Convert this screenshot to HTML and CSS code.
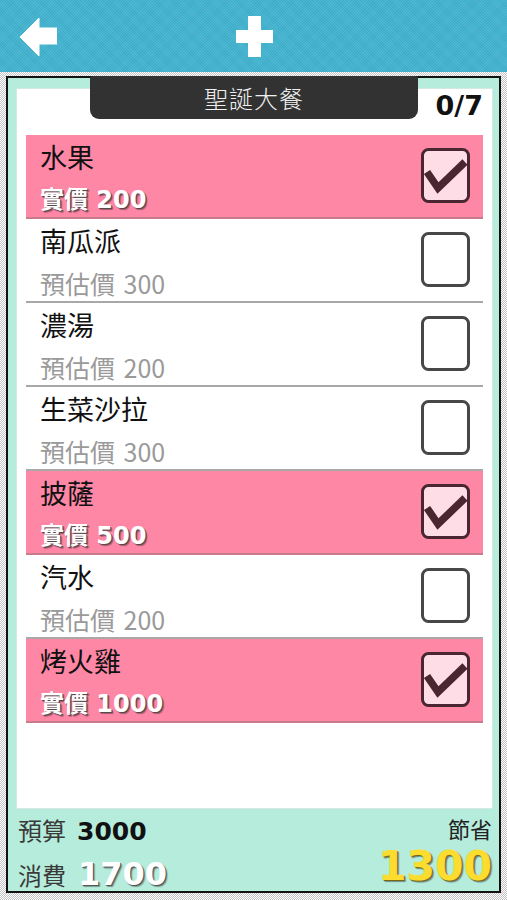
FILE: index.html
```html
<!DOCTYPE html>
<html lang="zh-Hant">
<head>
    <meta charset="UTF-8">
    <meta name="viewport" content="width=device-width, initial-scale=1.0">
    <title>聖誕大餐</title>
    <link rel="stylesheet" href="styles.css">
</head>
<body>
    <header class="topbar">
        <button class="icon-btn back">
            <svg width="37" height="40" viewBox="0 0 37 40"><path d="M0 20 L19 1 L19 11 L37 11 L37 27 L19 27 L19 39 Z" fill="#fff" stroke="#fff" stroke-width="1" stroke-linejoin="round"/></svg>
        </button>
        <button class="icon-btn add">
            <svg width="37" height="41" viewBox="0 0 37 41"><path d="M12 0 H25 V14 H37 V27 H25 V41 H12 V27 H0 V14 H12 Z" fill="#fff"/></svg>
        </button>
    </header>

    <main class="stage">
        <section class="panel">
            <div class="tab">聖誕大餐</div>
            <div class="sheet">
                <div class="sheet-head"><span class="count">0/7</span></div>
                <ul class="items">
                    <li class="item done">
                        <div class="info"><div class="name">水果</div><div class="price">實價 200</div></div>
                        <svg class="box" width="49" height="55" viewBox="0 0 49 55"><rect x="1.5" y="1.5" width="46" height="52" rx="6" fill="#ffdde6" stroke="#4a2631" stroke-width="3"/><path d="M6 24 L17 40 L44 14" fill="none" stroke="#4a2631" stroke-width="7.5"/></svg>
                    </li>
                    <li class="item">
                        <div class="info"><div class="name">南瓜派</div><div class="est">預估價 300</div></div>
                        <svg class="box" width="49" height="55" viewBox="0 0 49 55"><rect x="1.5" y="1.5" width="46" height="52" rx="6" fill="#fff" stroke="#474747" stroke-width="3"/></svg>
                    </li>
                    <li class="item">
                        <div class="info"><div class="name">濃湯</div><div class="est">預估價 200</div></div>
                        <svg class="box" width="49" height="55" viewBox="0 0 49 55"><rect x="1.5" y="1.5" width="46" height="52" rx="6" fill="#fff" stroke="#474747" stroke-width="3"/></svg>
                    </li>
                    <li class="item">
                        <div class="info"><div class="name">生菜沙拉</div><div class="est">預估價 300</div></div>
                        <svg class="box" width="49" height="55" viewBox="0 0 49 55"><rect x="1.5" y="1.5" width="46" height="52" rx="6" fill="#fff" stroke="#474747" stroke-width="3"/></svg>
                    </li>
                    <li class="item done">
                        <div class="info"><div class="name">披薩</div><div class="price">實價 500</div></div>
                        <svg class="box" width="49" height="55" viewBox="0 0 49 55"><rect x="1.5" y="1.5" width="46" height="52" rx="6" fill="#ffdde6" stroke="#4a2631" stroke-width="3"/><path d="M6 24 L17 40 L44 14" fill="none" stroke="#4a2631" stroke-width="7.5"/></svg>
                    </li>
                    <li class="item">
                        <div class="info"><div class="name">汽水</div><div class="est">預估價 200</div></div>
                        <svg class="box" width="49" height="55" viewBox="0 0 49 55"><rect x="1.5" y="1.5" width="46" height="52" rx="6" fill="#fff" stroke="#474747" stroke-width="3"/></svg>
                    </li>
                    <li class="item done">
                        <div class="info"><div class="name">烤火雞</div><div class="price">實價 1000</div></div>
                        <svg class="box" width="49" height="55" viewBox="0 0 49 55"><rect x="1.5" y="1.5" width="46" height="52" rx="6" fill="#ffdde6" stroke="#4a2631" stroke-width="3"/><path d="M6 24 L17 40 L44 14" fill="none" stroke="#4a2631" stroke-width="7.5"/></svg>
                    </li>
                </ul>
            </div>
            <footer class="totals">
                <div class="left">
                    <div class="budget"><span class="label">預算</span><b>3000</b></div>
                    <div class="spent"><span class="label">消費</span><b>1700</b></div>
                </div>
                <div class="right">
                    <div class="save-label">節省</div>
                    <div class="saved">1300</div>
                </div>
            </footer>
        </section>
    </main>
</body>
</html>
```

FILE: styles.css
```css
body {
    margin: 0;
    width: 507px;
    height: 900px;
    overflow: hidden;
    font-family: "Noto Sans CJK TC", "Noto Sans", sans-serif;
    background-color: #fff;
}
.topbar {
    height: 72px;
    display: flex;
    align-items: flex-start;
    padding-left: 20px;
    box-sizing: border-box;
    background-color: #42b3cf;
    background-image:
        repeating-linear-gradient(45deg, rgba(255,255,255,0.07) 0 1px, transparent 1px 2px),
        repeating-linear-gradient(-45deg, rgba(0,60,90,0.06) 0 1px, transparent 1px 2px);
}
.icon-btn {
    border: none;
    background: none;
    padding: 0;
    display: block;
}
.back {
    margin-top: 17px;
}
.add {
    margin-top: 16px;
    margin-left: 179px;
}
.stage {
    height: 828px;
    box-sizing: border-box;
    padding: 4px 6px 7px 6px;
    background-color: #fff;
    background-image: repeating-conic-gradient(#c4c4c4 0 25%, #fff 0 50%);
    background-size: 2px 2px;
}
.panel {
    position: relative;
    height: 817px;
    box-sizing: border-box;
    border: 2px solid #111;
    background-color: #b6ecdb;
    padding: 11px 7px 0 9px;
    display: flex;
    flex-direction: column;
}
.tab {
    position: absolute;
    left: 82px;
    top: -2px;
    width: 328px;
    height: 43px;
    line-height: 43px;
    background-color: #323232;
    border-radius: 2px 2px 9px 9px;
    color: #f0f0f0;
    text-align: center;
    font-size: 24px;
    font-weight: 300;
    letter-spacing: 1px;
}
.sheet {
    height: 719px;
    box-sizing: border-box;
    background-color: #fff;
    padding: 0 9px;
    box-shadow: 0 0 0 1px #d4e9e2;
}
.sheet-head {
    height: 46px;
    display: flex;
    justify-content: flex-end;
}
.count {
    font-family: "DejaVu Sans", sans-serif;
    font-weight: bold;
    font-size: 27px;
    line-height: 34px;
    color: #111;
}
.items {
    list-style: none;
    margin: 0;
    padding: 0;
}
.item {
    height: 84px;
    box-sizing: border-box;
    border-bottom: 2px solid #a8a8a8;
    display: flex;
    align-items: center;
    justify-content: space-between;
    padding: 0 13px 0 14px;
}
.item.done {
    background-color: #ff87a6;
    border-bottom-color: #c97a8c;
}
.info {
    align-self: flex-start;
    padding-top: 2px;
}
.name {
    font-size: 27px;
    line-height: 40px;
    color: #111;
}
.est {
    font-size: 25px;
    line-height: 36px;
    margin-top: 4px;
    color: #9a9a9a;
    word-spacing: 3px;
}
.price {
    font-family: "DejaVu Sans", "Noto Sans CJK TC", sans-serif;
    font-weight: bold;
    font-size: 24px;
    line-height: 36px;
    margin-top: 5px;
    color: #fff;
    text-shadow: 1px 1px 0 #5a4a4e, 2px 2px 1px rgba(0,0,0,0.35);
}
.box {
    display: block;
    margin-top: -1px;
}
.totals {
    height: 83px;
    display: flex;
    justify-content: space-between;
    padding-left: 1px;
}
.budget {
    line-height: 44px;
}
.spent {
    line-height: 39px;
}
.label {
    font-size: 24px;
    color: #3a3a3a;
}
.budget b, .spent b, .saved {
    font-family: "DejaVu Sans", sans-serif;
    font-weight: bold;
}
.budget b {
    font-size: 25px;
    color: #111;
    margin-left: 11px;
}
.spent b {
    font-size: 32px;
    color: #fff;
    margin-left: 12px;
    text-shadow: 1px 1px 0 #555, 2px 2px 1px rgba(0,0,0,0.35);
}
.right {
    text-align: right;
}
.save-label {
    font-size: 22px;
    line-height: 40px;
    color: #222;
}
.saved {
    font-size: 41px;
    line-height: 36px;
    color: #fcdc2e;
    text-shadow: 1px 1px 0 #7a6818, 2px 2px 1px rgba(0,0,0,0.4);
}
```
